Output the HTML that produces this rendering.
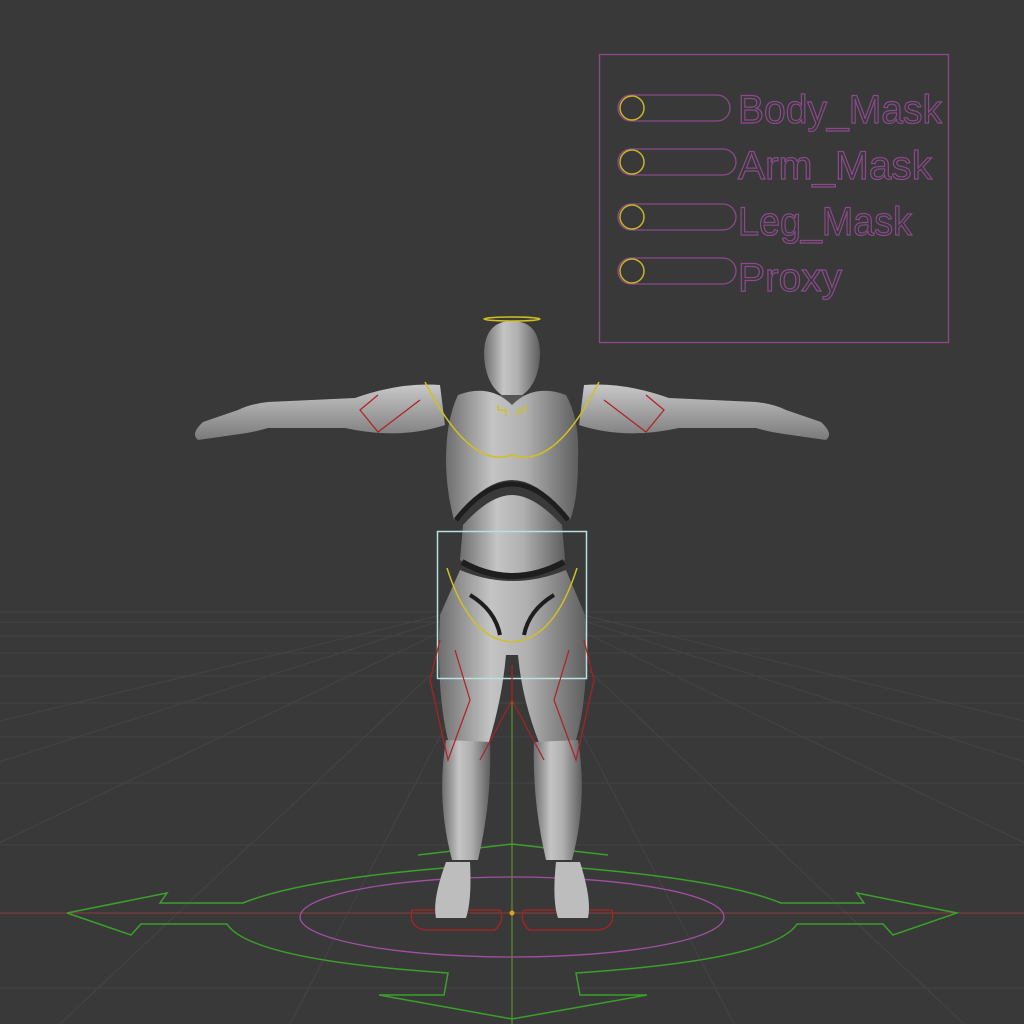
<!DOCTYPE html>
<html><head><meta charset="utf-8"><style>
html,body{margin:0;padding:0;background:#393939;}
svg{display:block}
</style></head><body>
<svg width="1024" height="1024" viewBox="0 0 1024 1024" xmlns="http://www.w3.org/2000/svg">
<defs>
<linearGradient id="g" x1="0" y1="0" x2="1" y2="0">
<stop offset="0" stop-color="#6e6e6e"/><stop offset="0.35" stop-color="#c4c4c4"/><stop offset="0.6" stop-color="#b0b0b0"/><stop offset="1" stop-color="#5e5e5e"/>
</linearGradient>
<linearGradient id="gv" x1="0" y1="0" x2="0" y2="1">
<stop offset="0" stop-color="#c8c8c8"/><stop offset="1" stop-color="#7a7a7a"/>
</linearGradient>
</defs>
<rect width="1024" height="1024" fill="#393939"/>
<g stroke="#444" stroke-width="1" fill="none">
<line x1="0" y1="612" x2="1024" y2="612"/>
<line x1="0" y1="622" x2="1024" y2="622"/>
<line x1="0" y1="636" x2="1024" y2="636"/>
<line x1="0" y1="653" x2="1024" y2="653"/>
<line x1="0" y1="676" x2="1024" y2="676"/><line x1="0" y1="703" x2="1024" y2="703"/>
<line x1="0" y1="737" x2="1024" y2="737"/><line x1="0" y1="783" x2="1024" y2="783"/>
<line x1="0" y1="845" x2="1024" y2="845"/><line x1="0" y1="988" x2="1024" y2="988"/>
<line x1="512" y1="598" x2="-1260" y2="1024"/><line x1="512" y1="598" x2="-820" y2="1024"/>
<line x1="512" y1="598" x2="-380" y2="1024"/><line x1="512" y1="598" x2="60" y2="1024"/>
<line x1="512" y1="598" x2="290" y2="1024"/><line x1="512" y1="598" x2="734" y2="1024"/>
<line x1="512" y1="598" x2="964" y2="1024"/><line x1="512" y1="598" x2="1404" y2="1024"/>
<line x1="512" y1="598" x2="1844" y2="1024"/><line x1="512" y1="598" x2="2284" y2="1024"/>
</g>
<line x1="0" y1="913" x2="1024" y2="913" stroke="#8a3a3a" stroke-width="1"/>
<line x1="512" y1="680" x2="512" y2="1024" stroke="#6a9a30" stroke-width="1"/>

<g fill="none" stroke="#8a4a8a" stroke-width="1.3">
<rect x="599.5" y="54.5" width="349" height="288"/>
<rect x="618" y="95" width="112" height="26" rx="13"/>
<rect x="618" y="149" width="118" height="26" rx="13"/>
<rect x="618" y="204" width="118" height="26" rx="13"/>
<rect x="618" y="258" width="118" height="26" rx="13"/>
</g>
<g fill="none" stroke="#c8b428" stroke-width="1.5">
<circle cx="632" cy="108" r="12"/><circle cx="632" cy="162" r="12"/>
<circle cx="632" cy="217" r="12"/><circle cx="632" cy="271" r="12"/>
</g>
<g font-family="Liberation Sans, sans-serif" font-size="40" fill="none" stroke="#8a4a8a" stroke-width="1.2">
<text x="738" y="123" textLength="204" lengthAdjust="spacingAndGlyphs">Body_Mask</text>
<text x="738" y="179" textLength="194" lengthAdjust="spacingAndGlyphs">Arm_Mask</text>
<text x="738" y="235" textLength="174" lengthAdjust="spacingAndGlyphs">Leg_Mask</text>
<text x="738" y="291" textLength="104" lengthAdjust="spacingAndGlyphs">Proxy</text>
</g>

<ellipse cx="512" cy="917" rx="212" ry="40" fill="none" stroke="#a050a0" stroke-width="1.3"/>
<g fill="none" stroke="#3aa02a" stroke-width="1.5">
<path d="M67,913 L167,893 L160,903 L243,903 Q300,880 444,868"/>
<path d="M67,913 L131,935 L141,924 L227,924 Q250,960 448,973 L444,995 L379,995 L512,1019 L647,995 L580,995 L576,973 Q774,960 797,924 L883,924 L893,935 L957,913 L857,893 L864,903 L781,903 Q724,880 580,868"/>
<path d="M418,855 L512,844 L608,855"/>
</g>
<g fill="none" stroke="#b02020" stroke-width="1.3">
<path d="M412,910 Q408,930 430,930 L495,930 Q505,920 500,910 Z"/>
<path d="M524,910 Q519,920 529,930 L594,930 Q616,930 612,910 Z"/>
</g>
<circle cx="512" cy="913" r="2.5" fill="#e0a020"/>

<g>
<path d="M440,385 Q400,382 355,398 L268,402 Q250,404 238,410 L203,422 Q190,434 198,440 L240,434 Q255,432 268,428 L345,428 Q400,440 445,425 Z" fill="url(#gv)"/>
<path d="M584,385 Q624,382 669,398 L756,402 Q774,404 786,410 L821,422 Q834,434 826,440 L784,434 Q769,432 756,428 L679,428 Q624,440 579,425 Z" fill="url(#gv)"/>
<path d="M512,321 Q484,321 484,355 Q486,392 512,400 Q538,392 540,355 Q540,321 512,321 Z" fill="url(#g)"/>
<rect x="498" y="395" width="28" height="16" fill="#555"/>
<path d="M458,395 Q490,383 512,405 Q534,383 566,395 Q580,420 578,460 Q578,500 570,520 Q540,480 512,480 Q484,480 454,520 Q446,490 446,460 Q446,420 458,395 Z" fill="url(#g)"/>
<path d="M456,520 Q484,484 512,484 Q540,484 568,520" fill="none" stroke="#1e1e1e" stroke-width="5"/>
<path d="M463,525 Q490,495 512,495 Q534,495 562,525 L565,560 Q540,575 512,575 Q484,575 460,560 Z" fill="url(#g)"/>
<path d="M462,562 Q512,590 564,562" fill="none" stroke="#1e1e1e" stroke-width="6"/>
<path d="M460,570 Q512,592 566,570 L585,615 Q590,690 576,740 L540,745 Q522,700 518,655 L506,655 Q502,700 488,745 L448,740 Q436,690 440,615 Z" fill="url(#g)"/>
<path d="M470,595 Q495,610 500,635 M554,595 Q529,610 524,635" fill="none" stroke="#1e1e1e" stroke-width="4"/>
<path d="M446,740 L490,742 Q492,800 478,860 L452,860 Q436,800 446,740 Z" fill="url(#g)"/>
<path d="M534,742 L578,740 Q588,800 572,860 L546,860 Q532,800 534,742 Z" fill="url(#g)"/>
<path d="M446,862 L470,862 Q472,900 466,918 L436,918 Q432,900 446,862 Z" fill="#bdbdbd"/>
<path d="M556,862 L580,862 Q592,900 588,918 L558,918 Q552,900 556,862 Z" fill="#bdbdbd"/>
</g>
<rect x="437.5" y="531.5" width="149" height="147" fill="none" stroke="#b8e0e0" stroke-width="1.5"/>
<g fill="none" stroke="#d0c020" stroke-width="1.5">
<ellipse cx="512" cy="319" rx="28" ry="2"/>
<path d="M425,382 Q470,470 512,455 Q555,470 599,382"/>
<path d="M447,568 Q470,640 512,642 Q554,640 577,568"/>
<path d="M498,405 L498,410 L506,410 L506,416 M526,405 L526,410 L518,410 L518,416"/>
</g>
<g fill="none" stroke="#b02020" stroke-width="1.2">
<path d="M440,640 L430,680 L448,760 L470,700 L455,650"/>
<path d="M584,640 L594,680 L576,760 L554,700 L569,650"/>
<path d="M512,665 L512,700 L480,760 M512,700 L544,760"/>
<path d="M378,395 L360,410 L378,432 L420,400"/>
<path d="M646,395 L664,410 L646,432 L604,400"/>
</g>
</svg>
</body></html>
